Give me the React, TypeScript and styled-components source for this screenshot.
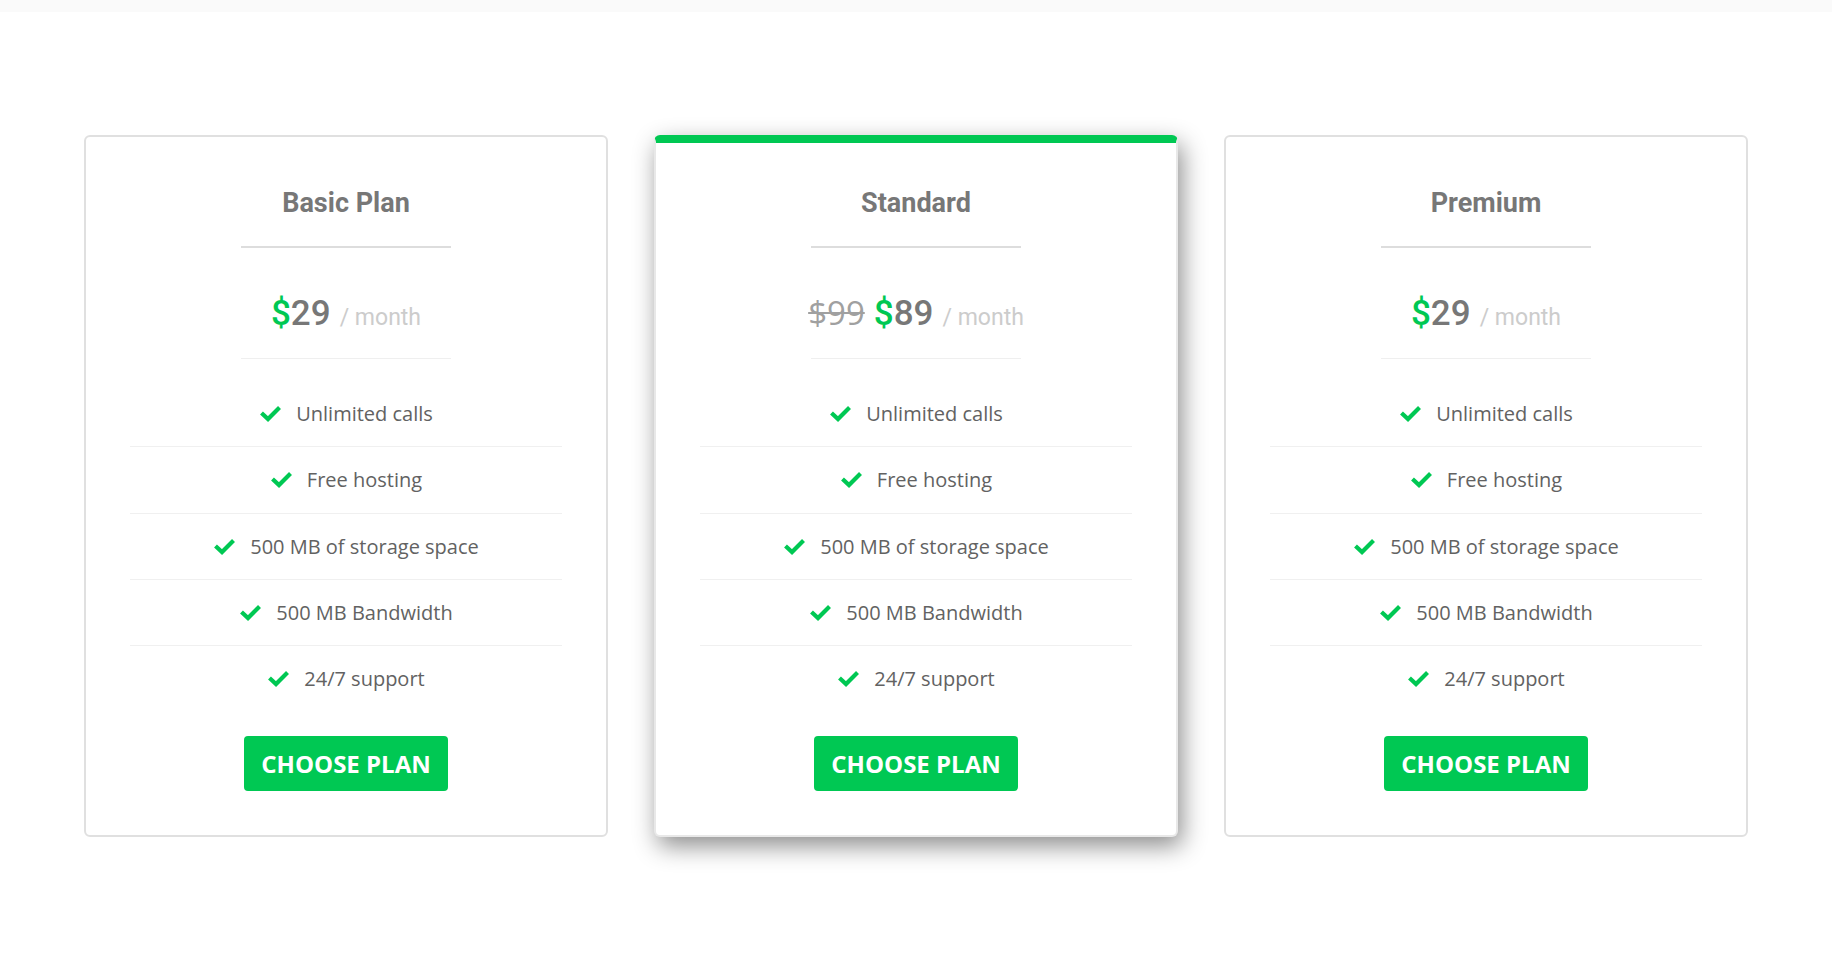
import { FC } from "react"
import styled, { createGlobalStyle, css } from "styled-components"

const GREEN = "#00c853"

const GlobalStyle = createGlobalStyle`
  html, body {
    margin: 0;
    padding: 0;
    background: #ffffff;
  }
  body {
    font-family: "Open Sans", "Liberation Sans", sans-serif;
  }
`

const TopStrip = styled.div`
  height: 12px;
  background: #fafafa;
`

const Section = styled.section`
  padding: 123px 84px 60px;
`

const Grid = styled.div`
  display: grid;
  grid-template-columns: repeat(3, 1fr);
  column-gap: 46px;
`

const Card = styled.div<{ $featured?: boolean }>`
  background: #ffffff;
  border: 2px solid #e0e0e0;
  border-radius: 6px;
  padding: 50px 44px 44px;
  display: flex;
  flex-direction: column;
  align-items: center;

  ${({ $featured }) => $featured && css`
    border-color: #e8e8e8;
    border-top: 8px solid ${GREEN};
    padding-top: 44px;
    box-shadow: 4px 9px 24px rgba(0, 0, 0, 0.45);
  `}
`

const Title = styled.h3`
  margin: 0;
  font-family: Roboto, "Liberation Sans", sans-serif;
  font-size: 27px;
  line-height: 32px;
  font-weight: 700;
  color: #777777;
`

const Rule = styled.div<{ $light?: boolean }>`
  width: 210px;
  height: ${({ $light }) => ($light ? "1px" : "2px")};
  background: ${({ $light }) => ($light ? "#efefef" : "#dddddd")};
  margin-top: ${({ $light }) => ($light ? "24px" : "27px")};
`

const PriceRow = styled.div`
  display: flex;
  justify-content: center;
  align-items: baseline;
  gap: 9px;
  margin-top: 45px;
  line-height: 41px;
`

const OldPrice = styled.span`
  font-family: "Open Sans", "Liberation Sans", sans-serif;
  font-size: 33px;
  line-height: 1;
  color: #a0a0a0;
  text-decoration: line-through;
  text-decoration-thickness: 2px;
`

const Amount = styled.span`
  font-family: Roboto, "Liberation Sans", sans-serif;
  font-size: 35px;
  font-weight: 500;
  color: #777777;
`

const Currency = styled.span`
  color: ${GREEN};
`

const Period = styled.span`
  font-family: Roboto, "Liberation Sans", sans-serif;
  font-size: 23px;
  line-height: 1;
  color: #cccccc;
`

const Features = styled.ul`
  list-style: none;
  margin: 22px 0 0;
  padding: 0;
  align-self: stretch;
`

const Feature = styled.li`
  display: flex;
  justify-content: center;
  align-items: center;
  gap: 14px;
  padding: 20px 0;
  line-height: 25.3px;
  font-size: 20px;
  color: #626262;
  border-bottom: 1px solid #f0f0f0;

  &:last-child {
    border-bottom: none;
  }
`

const CheckMark = styled.svg`
  flex: none;
  display: block;
`

const ChooseButton = styled.button`
  margin-top: 25px;
  border: none;
  border-radius: 4px;
  background: ${GREEN};
  color: #ffffff;
  font-family: "Open Sans", "Liberation Sans", sans-serif;
  font-size: 24px;
  font-weight: 700;
  line-height: 29px;
  padding: 13px 17px;
  cursor: pointer;
`

type Plan = {
  name: string,
  oldPrice?: string,
  price: string,
  featured?: boolean,
}

const plans: Plan[] = [
  { name: "Basic Plan", price: "29" },
  { name: "Standard", oldPrice: "$99", price: "89", featured: true },
  { name: "Premium", price: "29" },
]

const features = [
  "Unlimited calls",
  "Free hosting",
  "500 MB of storage space",
  "500 MB Bandwidth",
  "24/7 support",
]

const Check: FC = () => (
  <CheckMark width="23" height="17" viewBox="0 0 23 17">
    <polyline points="2.5,8 9,14 20.5,2.5" fill="none" stroke={GREEN} strokeWidth="4.2" />
  </CheckMark>
)

const PlanCard: FC<{ plan: Plan }> = ({ plan }) => (
  <Card $featured={plan.featured}>
    <Title>{plan.name}</Title>
    <Rule />
    <PriceRow>
      {plan.oldPrice && <OldPrice>{plan.oldPrice}</OldPrice>}
      <Amount><Currency>$</Currency>{plan.price}</Amount>
      <Period>/ month</Period>
    </PriceRow>
    <Rule $light />
    <Features>
      {features.map(f => (
        <Feature key={f}>
          <Check />
          {f}
        </Feature>
      ))}
    </Features>
    <ChooseButton type="button">CHOOSE PLAN</ChooseButton>
  </Card>
)

export default function App() {
  return (
    <>
      <GlobalStyle />
      <TopStrip />
      <Section>
        <Grid>
          {plans.map(p => <PlanCard key={p.name} plan={p} />)}
        </Grid>
      </Section>
    </>
  )
}
